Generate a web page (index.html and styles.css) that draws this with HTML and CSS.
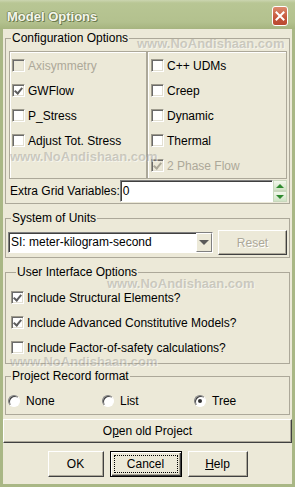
FILE: index.html
```html
<!DOCTYPE html>
<html lang="en">
<head>
    <meta charset="UTF-8">
    <title>Model Options</title>
    <link rel="stylesheet" href="styles.css">
</head>
<body>
    <div class="window">
        <div class="titlebar">
            <span class="title">Model Options</span>
            <span class="close">
                <svg width="10" height="10" viewBox="0 0 10 10">
                    <path d="M1.5 1.5 L8.5 8.5 M8.5 1.5 L1.5 8.5" stroke="#fff" stroke-width="2" stroke-linecap="square"/>
                </svg>
            </span>
        </div>

        <div class="client">
            <fieldset class="group config">
                <legend>Configuration Options</legend>
                <div class="panes">
                    <div class="pane left">
                        <div class="check disabled"><span class="box"></span>Axisymmetry</div>
                        <div class="check"><span class="box checked"></span>GWFlow</div>
                        <div class="check"><span class="box"></span>P_Stress</div>
                        <div class="check"><span class="box"></span>Adjust Tot. Stress</div>
                    </div>
                    <div class="pane right">
                        <div class="check"><span class="box"></span>C++ UDMs</div>
                        <div class="check"><span class="box"></span>Creep</div>
                        <div class="check"><span class="box"></span>Dynamic</div>
                        <div class="check"><span class="box"></span>Thermal</div>
                        <div class="check disabled"><span class="box checked"></span>2 Phase Flow</div>
                    </div>
                </div>
                <div class="grid-row">
                    <span class="grid-label">Extra Grid Variables:</span>
                    <div class="spin-field">
                        <span class="spin-input">0</span>
                        <div class="spin-buttons">
                            <span class="spin up"></span>
                            <span class="spin down"></span>
                        </div>
                    </div>
                </div>
            </fieldset>

            <fieldset class="group units">
                <legend>System of Units</legend>
                <div class="units-row">
                    <div class="select">
                        <span class="select-text">SI: meter-kilogram-second</span>
                        <span class="select-btn"></span>
                    </div>
                    <span class="btn reset">Reset</span>
                </div>
            </fieldset>

            <fieldset class="group ui-options">
                <legend>User Interface Options</legend>
                <div class="check"><span class="box checked"></span>Include Structural Elements?</div>
                <div class="check"><span class="box checked"></span>Include Advanced Constitutive Models?</div>
                <div class="check"><span class="box"></span>Include Factor-of-safety calculations?</div>
            </fieldset>

            <fieldset class="group record">
                <legend>Project Record format</legend>
                <div class="radios">
                    <div class="option"><span class="radio"></span>None</div>
                    <div class="option"><span class="radio"></span>List</div>
                    <div class="option"><span class="radio selected"></span>Tree</div>
                </div>
            </fieldset>

            <div class="btn open">O<u>p</u>en old Project</div>

            <div class="actions">
                <span class="btn ok">OK</span>
                <span class="btn cancel default">Cancel</span>
                <span class="btn help"><u>H</u>elp</span>
            </div>
        </div>

        <span class="watermark wm1">www.NoAndishaan.com</span>
        <span class="watermark wm2">www.NoAndishaan.com</span>
        <span class="watermark wm3">www.NoAndishaan.com</span>
        <span class="watermark wm4">www.NoAndishaan.com</span>
    </div>
</body>
</html>
```

FILE: styles.css
```css
* {
    margin: 0;
    padding: 0;
    box-sizing: border-box;
}

body {
    width: 295px;
    height: 487px;
    overflow: hidden;
    font-family: 'Liberation Sans', Arial, sans-serif;
    font-size: 12px;
    color: #000;
}

.window {
    position: relative;
    width: 295px;
    height: 487px;
    background: #a9b785;
    padding: 0 3px 3px;
    display: flex;
    flex-direction: column;
}

/* title bar */
.titlebar {
    height: 29px;
    margin: 0 -3px;
    padding: 3px 7px 0 7px;
    display: flex;
    align-items: center;
    background: linear-gradient(#cbd5b0 0, #b8c694 3px, #b3c18e 22px, #a6b47f 29px);
}

.title {
    font-size: 13px;
    font-weight: bold;
    color: #f4f6ec;
    text-shadow: 1px 1px 0 #6b7a4c, -1px 0 0 #7d8c5c, 0 -1px 0 #8a9968;
}

.close {
    margin-left: auto;
    width: 16px;
    height: 20px;
    border: 1px solid #fff;
    border-radius: 3px;
    background: linear-gradient(#dc8a6c, #c5553a 60%, #b94a30);
    display: flex;
    align-items: center;
    justify-content: center;
}

/* client area */
.client {
    flex: 1;
    background: #ece9d8;
    padding-top: 2px;
    display: flex;
    flex-direction: column;
}

.group {
    margin: 0 2px;
    border: 1px solid #aca899;
    padding: 0;
    min-width: 0;
}

.group legend {
    margin-left: 5px;
    padding: 0 1px;
    line-height: 14px;
}

.panes {
    display: grid;
    grid-template-columns: 138px 140px;
    height: 127px;
    margin: 6px 2px 0 3px;
}

.pane {
    border: 1px solid #aca899;
    box-shadow: inset 1px 1px 0 #fff;
    padding-top: 1px;
    display: flex;
    flex-direction: column;
}

.pane.left {
    padding-left: 2px;
}

.pane.right {
    padding-left: 3px;
}

.check {
    height: 25px;
    display: flex;
    align-items: center;
    white-space: nowrap;
}

.check.disabled {
    color: #aca899;
}

.box {
    flex: none;
    width: 13px;
    height: 13px;
    margin-right: 3px;
    background: #fff;
    border: 1px solid;
    border-color: #9d9a8c #fff #fff #9d9a8c;
    box-shadow: inset 1px 1px 0 #6a6a6a, inset -1px -1px 0 #e2dfd2;
    display: flex;
    align-items: center;
    justify-content: center;
}

.check.disabled .box {
    background: #ece9d8;
}

.box.checked::after {
    content: '';
    width: 3px;
    height: 6px;
    margin-top: -2px;
    border: solid #5e5e5e;
    border-width: 0 2px 2px 0;
    transform: rotate(40deg);
}

.check.disabled .box.checked::after {
    border-color: #aca899;
}

/* extra grid variables */
.grid-row {
    height: 22px;
    margin: 2px 2px 1px 4px;
    display: flex;
    align-items: center;
}

.grid-label {
    white-space: nowrap;
}

.spin-field {
    flex: 1;
    height: 22px;
    display: flex;
}

.spin-input {
    flex: 1;
    background: #fff;
    border: 1px solid;
    border-color: #808080 #fff #fff #808080;
    box-shadow: inset 1px 1px 0 #404040;
    padding: 1px 0 0 2px;
    line-height: 18px;
}

.spin-buttons {
    width: 14px;
    display: flex;
    flex-direction: column;
}

.spin {
    flex: 1;
    display: flex;
    align-items: center;
    justify-content: center;
    background: linear-gradient(#f3f7ec, #cfe3c4);
    border: 1px solid #c9d8bd;
}

.spin.up::after {
    content: '';
    border-left: 4px solid transparent;
    border-right: 4px solid transparent;
    border-bottom: 4px solid #2f8a2f;
}

.spin.down::after {
    content: '';
    border-left: 4px solid transparent;
    border-right: 4px solid transparent;
    border-top: 4px solid #2f8a2f;
}

/* system of units */
.group.units {
    margin-top: 7px;
}

.units-row {
    height: 25px;
    margin: 5px 2px 2px 2px;
    display: flex;
    align-items: center;
    gap: 5px;
}

.select {
    width: 205px;
    height: 21px;
    display: flex;
    background: #fff;
    border: 1px solid;
    border-color: #808080 #fff #fff #808080;
    box-shadow: inset 1px 1px 0 #404040;
}

.select-text {
    flex: 1;
    padding: 1px 0 0 2px;
    line-height: 17px;
}

.select-btn {
    width: 16px;
    background: #ece9d8;
    border: 1px solid;
    border-color: #fff #808080 #808080 #fff;
    display: flex;
    align-items: center;
    justify-content: center;
}

.select-btn::after {
    content: '';
    border-left: 5px solid transparent;
    border-right: 5px solid transparent;
    border-top: 5px solid #5a5a5a;
}

/* buttons */
.btn {
    display: flex;
    align-items: center;
    justify-content: center;
    background: #ece9d8;
    border: 1px solid;
    border-color: #fff #404040 #404040 #fff;
    box-shadow: inset -1px -1px 0 #aca899;
    white-space: nowrap;
}

.btn.reset {
    width: 69px;
    height: 25px;
    color: #aca899;
    text-shadow: 1px 1px 0 #fff;
}

/* user interface options */
.group.ui-options {
    margin-top: 7px;
    padding: 6px 0 3px 5px;
}

/* project record */
.group.record {
    margin-top: 5px;
}

.radios {
    height: 25px;
    margin: 5px 0 1px 2px;
    display: grid;
    grid-template-columns: 94px 92px 1fr;
}

.option {
    display: flex;
    align-items: center;
}

.radio {
    flex: none;
    width: 12px;
    height: 12px;
    margin-right: 6px;
    border-radius: 50%;
    background: #fff;
    border: 1px solid;
    border-color: #808080 #fff #fff #808080;
    box-shadow: inset 1px 1px 0 #404040;
    display: flex;
    align-items: center;
    justify-content: center;
}

.radio.selected::after {
    content: '';
    width: 4px;
    height: 4px;
    border-radius: 50%;
    background: #333;
}

.btn.open {
    height: 24px;
    margin-top: 4px;
}

.actions {
    margin-top: 8px;
    display: flex;
    justify-content: center;
    gap: 6px;
}

.actions .btn {
    height: 26px;
}

.btn.ok {
    width: 56px;
}

.btn.cancel {
    width: 72px;
}

.btn.help {
    width: 60px;
}

.btn.default {
    position: relative;
    border: 1px solid #000;
    box-shadow: inset 1px 1px 0 #fff, inset -1px -1px 0 #404040, inset -2px -2px 0 #aca899;
}

.btn.default::after {
    content: '';
    position: absolute;
    top: 3px;
    left: 3px;
    right: 3px;
    bottom: 3px;
    border: 1px dotted #000;
}

/* watermark over the dialog */
.watermark {
    position: absolute;
    font-size: 13px;
    font-weight: bold;
    line-height: 16px;
    color: rgba(140, 140, 135, 0.4);
    text-shadow: 1px 1px 0 rgba(255, 255, 255, 0.5);
    white-space: nowrap;
    pointer-events: none;
}

.wm1 { left: 137px; top: 36px; }
.wm2 { left: 10px; top: 149px; }
.wm3 { left: 107px; top: 276px; }
.wm4 { left: 10px; top: 354px; }
```
